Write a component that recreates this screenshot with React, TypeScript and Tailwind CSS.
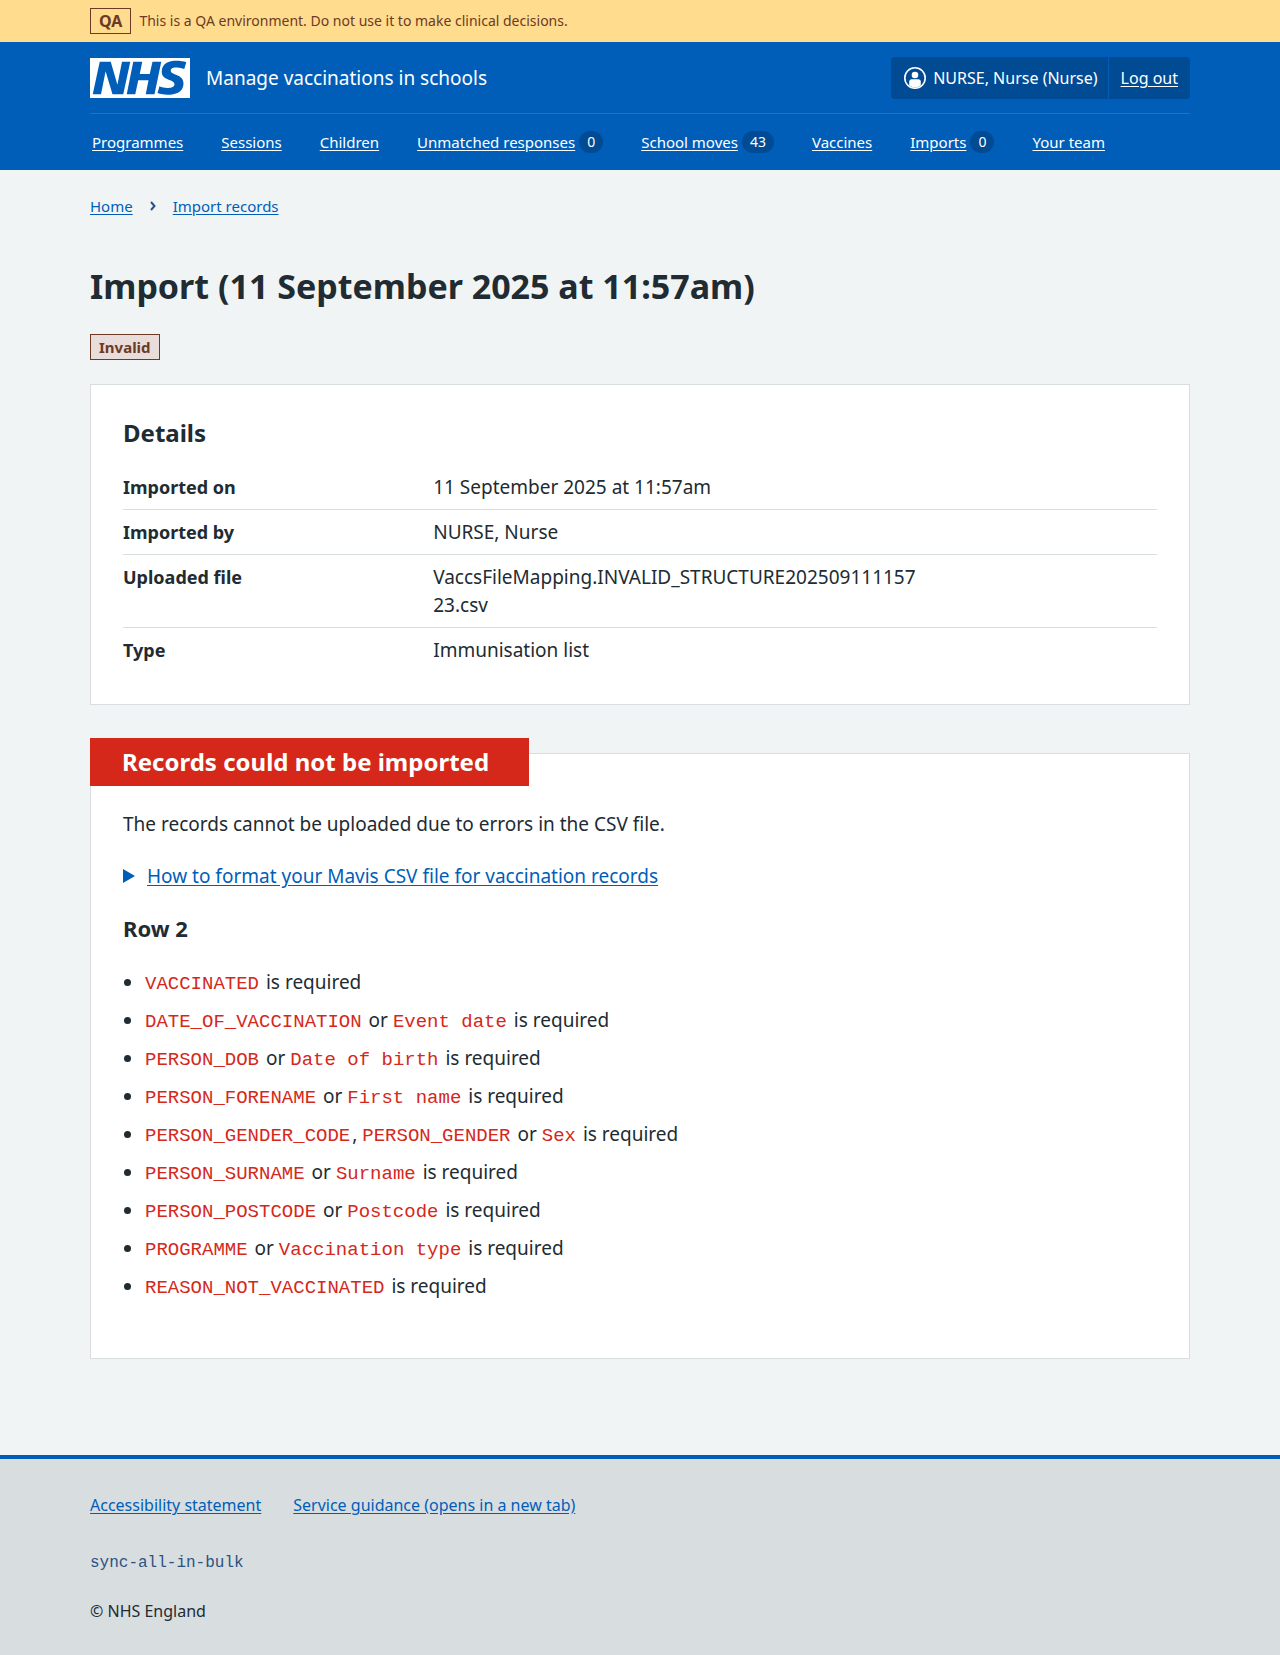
import React from "react";

type NavItem = { label: string; count?: number };

const navItems: NavItem[] = [
  { label: "Programmes" },
  { label: "Sessions" },
  { label: "Children" },
  { label: "Unmatched responses", count: 0 },
  { label: "School moves", count: 43 },
  { label: "Vaccines" },
  { label: "Imports", count: 0 },
  { label: "Your team" },
];

const details = [
  { term: "Imported on", value: "11 September 2025 at 11:57am" },
  { term: "Imported by", value: "NURSE, Nurse" },
  { term: "Uploaded file", value: "VaccsFileMapping.INVALID_STRUCTURE20250911115723.csv" },
  { term: "Type", value: "Immunisation list" },
];

const missingColumns: string[][] = [
  ["VACCINATED"],
  ["DATE_OF_VACCINATION", "Event date"],
  ["PERSON_DOB", "Date of birth"],
  ["PERSON_FORENAME", "First name"],
  ["PERSON_GENDER_CODE", "PERSON_GENDER", "Sex"],
  ["PERSON_SURNAME", "Surname"],
  ["PERSON_POSTCODE", "Postcode"],
  ["PROGRAMME", "Vaccination type"],
  ["REASON_NOT_VACCINATED"],
];

function Container({ children, className = "" }: { children: React.ReactNode; className?: string }) {
  return <div className={`mx-auto w-full max-w-[1164px] px-8 ${className}`}>{children}</div>;
}

function Logo() {
  return (
    <svg viewBox="0 0 200 80" className="h-10 w-[100px] shrink-0" role="img" aria-label="NHS">
      <path
        fill="#fff"
        d="M200 0v80H0V0h200Zm-27.5 5.5c-14.5 0-29 5-29 22 0 10.2 7.7 13.5 14.7 16.3l.7.3c5.4 2 10.1 3.9 10.1 8.4 0 6.5-8.5 7.5-14 7.5s-12.5-1.5-16-3.5L135 70c5.5 2 13.5 3.5 20 3.5 15.5 0 32-4.5 32-22.5 0-19.5-25.5-16.5-25.5-25.5 0-5.5 5.5-6.5 12.5-6.5a35 35 0 0 1 14.5 3l4-13.5c-4.5-2-12-3-20-3Zm-131 2h-22l-14 65H22l9-45h.5l13.5 45h21.5l14-65H64l-9 45h-.5l-13-45Zm63 0h-18l-13 65h17l6-28H117l-5.5 28H129l13.5-65H125L119.5 32h-20l5-24.5Z"
      />
    </svg>
  );
}

function UserIcon() {
  return (
    <svg viewBox="0 0 24 24" className="size-6 shrink-0" fill="#fff" aria-hidden="true">
      <circle cx="12" cy="12" r="10.200" fill="none" stroke="#fff" strokeWidth="1.600" />
      <circle cx="12" cy="9" r="3.300" />
      <path d="M8.500 13.300h7c1.300 0 2.300 1 2.300 2.300v4a10 10 0 0 1-11.600 0v-4c0-1.300 1-2.300 2.300-2.300Z" />
    </svg>
  );
}

function Row({ columns }: { columns: string[] }) {
  const last = columns.length - 1;
  return (
    <li className="mb-2.5 flex items-center">
      <span className="mr-3.5 ml-px size-[7px] shrink-0 rounded-full bg-[#212b32]" aria-hidden="true" />
      <span>
        {columns.map((column, i) => (
          <React.Fragment key={column}>
            {i > 0 && (i === last ? " or " : ", ")}
            <code className="mr-0.5 font-['Liberation_Mono',monospace] text-[19px] leading-none text-[#d5281b]">{column}</code>
          </React.Fragment>
        ))}
        {" is required"}
      </span>
    </li>
  );
}

export default function App() {
  return (
    <div className="flex min-h-screen flex-col bg-[#f0f4f5] font-['Noto_Sans','Open_Sans',sans-serif] text-base text-[#212b32]">
      <div className="bg-[#ffdc8e] text-[#6e3a23]">
        <Container className="flex items-center gap-2 py-2">
          <strong className="border border-[#6e3a23] px-2 leading-6">QA</strong>
          <span className="text-sm">This is a QA environment. Do not use it to make clinical decisions.</span>
        </Container>
      </div>

      <header className="bg-[#005eb8] text-white">
        <Container>
          <div className="flex items-center justify-between border-b border-[#336bb9] pt-[15px] pb-3.5">
            <a href="#" className="flex items-center gap-4 text-[19px] leading-7">
              <Logo />
              <span>Manage vaccinations in schools</span>
            </a>
            <div className="flex h-[42px] items-stretch rounded bg-[#004b93]">
              <span className="flex items-center gap-1.5 border-r border-[#005eb8] pr-2.5 pl-3">
                <UserIcon />
                NURSE, Nurse (Nurse)
              </span>
              <a href="#" className="flex items-center px-3 underline underline-offset-2">
                Log out
              </a>
            </div>
          </div>
          <nav aria-label="Menu">
            <ul className="flex flex-wrap gap-x-[38px] px-0.5 py-4">
              {navItems.map((item) => (
                <li key={item.label}>
                  <a href="#" className="flex items-center gap-1 text-[15px] leading-6">
                    <span className="underline underline-offset-2">{item.label}</span>
                    {item.count !== undefined && (
                      <span className="rounded-full bg-[#004b93] px-2 text-sm leading-[22px]">{item.count}</span>
                    )}
                  </a>
                </li>
              ))}
            </ul>
          </nav>
        </Container>
      </header>

      <Container className="pt-6">
        <nav aria-label="Breadcrumb">
          <ol className="flex items-center text-[15px] leading-6 text-[#005eb8]">
            <li>
              <a href="#" className="underline underline-offset-2">Home</a>
            </li>
            <li className="flex items-center">
              <svg viewBox="0 0 8 10" className="mx-4 h-2.5 w-2" fill="none" stroke="#2c5280" strokeWidth="2" aria-hidden="true">
                <path d="M2 1l3.500 4L2 9" />
              </svg>
              <a href="#" className="underline underline-offset-2">Import records</a>
            </li>
          </ol>
        </nav>
      </Container>

      <main className="grow pt-10 pb-[92px]">
        <Container>
          <h1 className="mb-5 text-[34px] leading-14 font-bold">Import (11 September 2025 at 11:57am)</h1>
          <strong className="inline-block border border-[#6e3a23] bg-[#e8dddb] px-2 align-top text-[15px] leading-6 text-[#6e3a23]">
            Invalid
          </strong>

          <section className="mt-6 border border-[#d8dde0] bg-white p-8">
            <h2 className="mb-4 text-2xl leading-8 font-bold">Details</h2>
            <dl>
              {details.map(({ term, value }) => (
                <div key={term} className="flex border-b border-[#d8dde0] py-2 last:border-b-0">
                  <dt className="w-[30%] shrink-0 text-lg leading-7 font-bold">{term}</dt>
                  <dd className="w-1/2 pr-8 text-[19px] leading-7 break-words">{value}</dd>
                </div>
              ))}
            </dl>
          </section>

          <section className="mt-12 border border-[#d8dde0] bg-white px-8 pb-12 text-[19px] leading-7">
            <h2 className="-mt-4 -ml-[33px] inline-block bg-[#d5281b] pr-10 pl-8 align-top text-2xl leading-12 font-bold text-white">
              Records could not be imported
            </h2>
            <p className="mt-6">The records cannot be uploaded due to errors in the CSV file.</p>
            <details className="mt-6">
              <summary className="flex items-center gap-3 text-[#005eb8]">
                <svg viewBox="0 0 12 14" className="h-3.5 w-3" fill="#005eb8" aria-hidden="true">
                  <path d="M0 0l12 7L0 14Z" />
                </svg>
                <span className="underline underline-offset-2">
                  How to format your Mavis CSV file for vaccination records
                </span>
              </summary>
            </details>
            <h3 className="mt-[22px] mb-6 text-[22px] leading-8 font-bold">Row 2</h3>
            <ul>
              {missingColumns.map((columns) => (
                <Row key={columns[0]} columns={columns} />
              ))}
            </ul>
          </section>
        </Container>
      </main>

      <footer className="border-t-4 border-[#005eb8] bg-[#d8dde0]">
        <Container className="py-8 leading-6">
          <ul className="flex flex-wrap gap-x-8 text-[#005eb8]">
            <li>
              <a href="#" className="leading-7 underline underline-offset-2">Accessibility statement</a>
            </li>
            <li>
              <a href="#" className="leading-7 underline underline-offset-2">Service guidance (opens in a new tab)</a>
            </li>
          </ul>
          <p className="mt-8 font-['Liberation_Mono',monospace] text-[#2c5280]">sync-all-in-bulk</p>
          <p className="mt-6">© NHS England</p>
        </Container>
      </footer>
    </div>
  );
}
